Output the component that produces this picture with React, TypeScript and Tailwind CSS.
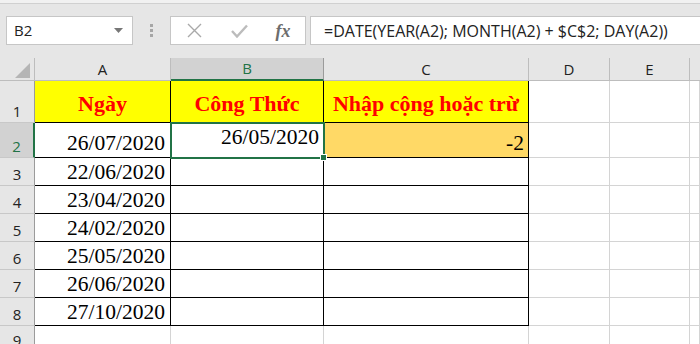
import React from "react";

const ui = { fontFamily: '"Open Sans", "Noto Sans", sans-serif' };
const serif = { fontFamily: '"Liberation Serif", "Times New Roman", serif' };

const dates = ["22/06/2020", "23/04/2020", "24/02/2020", "25/05/2020", "26/06/2020", "27/10/2020"];

function RowHead({ n, active, top }: { n: number; active?: boolean; top?: boolean }) {
  return (
    <div
      className={`flex justify-center text-[15px] leading-none border-b border-[#c8c8c8] ${
        top ? "items-start pt-[7px]" : "items-end pb-[3px]"
      } ${
        active
          ? "bg-[#d2d2d2] text-[#217346] border-r-2 border-r-[#217346]"
          : "bg-[#e6e6e6] text-[#222] border-r border-r-[#9b9b9b]"
      }`}
      style={ui}
    >
      <span>{n}</span>
    </div>
  );
}

function Blank() {
  return <div className="border-r border-b border-[#d4d4d4]" />;
}

export default function App() {
  return (
    <div className="w-[700px] h-[344px] overflow-hidden bg-[#e6e6e6] select-none" style={ui}>
      {/* toolbar */}
      <div className="h-[58px] border-t-[3px] border-t-[#f1f1f1] relative">
        <div className="absolute left-0 right-0 top-0 h-px bg-[#d0d0d0]" />
        <div className="flex items-center pt-[13px] pl-[6px]">
          <div className="w-[127px] h-[29px] bg-white border border-[#c6c6c6] flex items-center justify-between pl-[7px] pr-[9px]">
            <span className="text-[15px] text-[#222]">B2</span>
            <svg width="9" height="5" viewBox="0 0 9 5">
              <path d="M0 0 H9 L4.5 5 Z" fill="#777" />
            </svg>
          </div>
          <div className="w-[37px] flex flex-col items-center gap-[2px]">
            <div className="w-[3px] h-[3px] bg-[#a6a6a6]" />
            <div className="w-[3px] h-[3px] bg-[#a6a6a6]" />
            <div className="w-[3px] h-[3px] bg-[#a6a6a6]" />
          </div>
          <div className="w-[136px] h-[29px] bg-white border border-[#c6c6c6] flex items-center">
            <div className="w-[46px] flex justify-center">
              <svg width="15" height="15" viewBox="0 0 15 15">
                <path d="M1 1 L14 14 M14 1 L1 14" stroke="#a9a9a9" strokeWidth="1.4" />
              </svg>
            </div>
            <div className="w-[44px] flex justify-center">
              <svg width="17" height="14" viewBox="0 0 17 14">
                <path d="M1 7 L6 12.5 L16 1.5" stroke="#bcbcbc" strokeWidth="2.4" fill="none" />
              </svg>
            </div>
            <div className="w-[44px] flex justify-center">
              <span className="text-[18px] italic font-bold text-[#6d6d6d] leading-none" style={serif}>
                fx
              </span>
            </div>
          </div>
          <div className="ml-[4px] flex-1 h-[29px] bg-white border border-[#c6c6c6] border-r-0 flex items-center pl-[13px]">
            <span className="text-[16px] text-[#222] whitespace-nowrap">
              =DATE(YEAR(A2); MONTH(A2) + $C$2; DAY(A2))
            </span>
          </div>
        </div>
      </div>

      {/* sheet */}
      <div className="grid grid-cols-[35px_136px_153px_205px_81px_80px_1fr] grid-rows-[23px_42px_35px_28px_28px_28px_28px_28px_28px_28px] bg-white">
        {/* column headers */}
        <div className="bg-[#e6e6e6] border-r border-b border-[#bdbdbd] relative">
          <svg className="absolute right-[4px] bottom-[2px]" width="15" height="15" viewBox="0 0 15 15">
            <path d="M15 0 V15 H0 Z" fill="#b5b5b5" />
          </svg>
        </div>
        <div className="bg-[#e6e6e6] border-r border-b border-[#bdbdbd] flex items-center justify-center text-[15px] text-[#222]">A</div>
        <div className="bg-[#d2d2d2] border-r border-r-[#9b9b9b] border-b-2 border-b-[#217346] flex items-center justify-center text-[15px] text-[#217346]">B</div>
        <div className="bg-[#e6e6e6] border-r border-b border-[#bdbdbd] flex items-center justify-center text-[15px] text-[#222]">C</div>
        <div className="bg-[#e6e6e6] border-r border-b border-[#bdbdbd] flex items-center justify-center text-[15px] text-[#222]">D</div>
        <div className="bg-[#e6e6e6] border-r border-b border-[#bdbdbd] flex items-center justify-center text-[15px] text-[#222]">E</div>
        <div className="bg-[#e6e6e6] border-b border-[#bdbdbd]" />

        {/* row 1 */}
        <RowHead n={1} />
        <div className="bg-[#ffff00] border-r border-b border-black flex items-end justify-center pb-[7px] text-[22px] font-bold text-[#ff0000] leading-none" style={serif}>Ngày</div>
        <div className="bg-[#ffff00] border-r border-b border-black flex items-end justify-center pb-[7px] text-[22px] font-bold text-[#ff0000] leading-none" style={serif}>Công Thức</div>
        <div className="bg-[#ffff00] border-r border-b border-black flex items-end justify-center pb-[7px] text-[22px] font-bold text-[#ff0000] leading-none" style={serif}>Nhập cộng hoặc trừ</div>
        <Blank />
        <Blank />
        <Blank />

        {/* row 2 */}
        <RowHead n={2} active />
        <div className="border-r border-b border-black flex items-end justify-end pr-[5px] pb-[3px] text-[21.5px] text-black leading-none" style={serif}>26/07/2020</div>
        <div className="relative border-r border-b border-black outline-2 outline-[#217346] -outline-offset-1 flex items-center justify-end pr-[4px] pb-[4px] text-[21.5px] text-black leading-none" style={serif}>
          26/05/2020
          <div className="absolute right-[-4px] bottom-[-4px] w-[7px] h-[7px] bg-[#217346] border border-white" />
        </div>
        <div className="bg-[#ffd966] border-r border-b border-black flex items-end justify-end pr-[4px] pb-[3px] text-[21.5px] text-black leading-none" style={serif}>-2</div>
        <Blank />
        <Blank />
        <Blank />

        {/* rows 3-8 */}
        {dates.map((d, i) => (
          <React.Fragment key={d}>
            <RowHead n={i + 3} />
            <div className="border-r border-b border-black flex items-end justify-end pr-[5px] pb-[2px] text-[21.5px] text-black leading-none" style={serif}>{d}</div>
            <div className="border-r border-b border-black" />
            <div className="border-r border-b border-black" />
            <Blank />
            <Blank />
            <Blank />
          </React.Fragment>
        ))}

        {/* row 9, cut by the window edge */}
        <RowHead n={9} top />
        <Blank />
        <Blank />
        <Blank />
        <Blank />
        <Blank />
        <Blank />
      </div>
    </div>
  );
}
